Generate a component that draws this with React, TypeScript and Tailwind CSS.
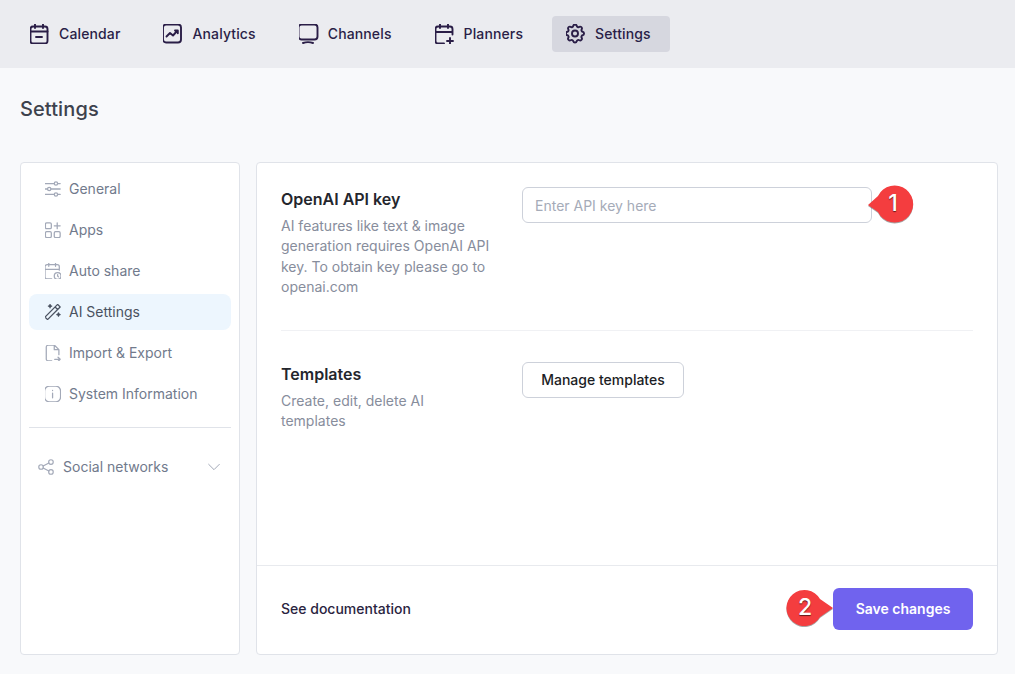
import React from "react";

const S = ({ children, size = 20, w = 2, vb = "0 0 24 24" }: { children: React.ReactNode; size?: number; w?: number; vb?: string }) => (
  <svg width={size} height={size} viewBox={vb} fill="none" stroke="currentColor" strokeWidth={w} strokeLinecap="round" strokeLinejoin="round" className="shrink-0">
    {children}
  </svg>
);

const nav = [
  { label: "Calendar", icon: <><rect x="3.5" y="5" width="17" height="17" rx="2.5" /><path d="M8 2.5v4M16 2.5v4M3.5 10h17M9 15.500h6" /></> },
  { label: "Analytics", icon: <><rect x="3" y="3" width="18" height="18" rx="3" /><path d="M6.500 15l3.500-3.500 3 2.500 4.500-5M15 9h2.800v2.800" /></> },
  { label: "Channels", icon: <><rect x="2.500" y="3" width="19" height="15" rx="3" /><path d="M7 21.500c3-1 7-1 10 0" /></> },
  { label: "Planners", icon: <><path d="M12 22H6a2.500 2.500 0 0 1-2.500-2.500V7.500A2.500 2.500 0 0 1 6 5h12a2.500 2.500 0 0 1 2.500 2.500V13M8 2.500v4M16 2.500v4M3.500 10.500h17M18 16.500v6M15 19.500h6" /></> },
  { label: "Settings", active: true, icon: <><path d="M10.300 4.300c.4-1.800 3-1.800 3.400 0a1.700 1.700 0 0 0 2.600 1.100c1.500-.9 3.300.8 2.400 2.400a1.700 1.700 0 0 0 1 2.500c1.800.4 1.800 3 0 3.400a1.700 1.700 0 0 0-1 2.600c.9 1.500-.9 3.300-2.400 2.400a1.700 1.700 0 0 0-2.600 1c-.4 1.800-3 1.800-3.400 0a1.700 1.700 0 0 0-2.600-1c-1.500.9-3.300-.9-2.400-2.400a1.700 1.700 0 0 0-1-2.600c-1.800-.4-1.800-3 0-3.400a1.700 1.700 0 0 0 1-2.500c-.9-1.600.9-3.300 2.400-2.400a1.700 1.700 0 0 0 2.600-1.100z" /><circle cx="12" cy="12" r="3" /></> },
];

const side = [
  { label: "General", icon: <><path d="M3 5.500h11M18 5.500h3M3 12h3M10 12h11M3 18.500h11M18 18.500h3" /><circle cx="16" cy="5.500" r="2" /><circle cx="8" cy="12" r="2" /><circle cx="16" cy="18.500" r="2" /></> },
  { label: "Apps", icon: <><rect x="3.500" y="3.500" width="7" height="7" rx="1.500" /><rect x="3.500" y="14" width="7" height="7" rx="1.500" /><rect x="14" y="14" width="7" height="7" rx="1.500" /><path d="M17.500 3.500v7M14 7h7" /></> },
  { label: "Auto share", icon: <><path d="M11 21.500H5.500A2.500 2.500 0 0 1 3 19V7a2.500 2.500 0 0 1 2.500-2.500h12A2.500 2.500 0 0 1 20 7v4M7.500 2v4.500M15.500 2v4.500M3 10h17" /><circle cx="18" cy="18" r="4" /><path d="M18 16.300V18l1 1" /></> },
  { label: "AI Settings", active: true, icon: <><path d="M6 21l15-15-3-3-15 15 3 3M15 6l3 3M9 3a2 2 0 0 0 2 2 2 2 0 0 0-2 2 2 2 0 0 0-2-2 2 2 0 0 0 2-2M19 13a2 2 0 0 0 2 2 2 2 0 0 0-2 2 2 2 0 0 0-2-2 2 2 0 0 0 2-2" /></> },
  { label: "Import & Export", icon: <><path d="M11 21.500H7A2.500 2.500 0 0 1 4.500 19V5A2.500 2.500 0 0 1 7 2.500h7l5.500 5.500v6M14 2.500V8h5.500M14.500 19.500h6.500M18.500 17l2.500 2.500-2.500 2.500" /></> },
  { label: "System Information", icon: <><rect x="2.500" y="2.500" width="19" height="19" rx="6" /><path d="M12 11v5.500M12 7.800v.1" /></> },
];

export default function App() {
  return (
    <div className="w-[1015px] h-[674px] overflow-hidden bg-[#f8f9fb] relative font-['Inter','Liberation_Sans',sans-serif]">
      <header className="h-[68px] bg-[#ebecf0] flex items-center pl-4 gap-[10px]">
        {nav.map((n) => (
          <div key={n.label} className={`h-9 flex items-center gap-[9px] pl-[14px] pr-[19px] rounded text-sm font-medium tracking-[0.13px] text-[#2a1e47] ${n.active ? "bg-[#d6d7df]" : ""}`}>
            <S size={20} w={1.9} vb="3 2.500 20 20">{n.icon}</S>
            <span>{n.label}</span>
          </div>
        ))}
      </header>

      <main className="px-5">
        <h1 className="text-xl font-medium tracking-[0.1px] text-[#3d424d] mt-[27px] h-7 leading-7">Settings</h1>
        <div className="flex gap-4 mt-[39px] w-[978px]">
          <aside className="w-[220px] h-[493px] shrink-0 bg-white border border-[#e0e3e9] rounded px-2 py-2">
            <div className="flex flex-col gap-[5px]">
              {side.map((s) => (
                <div key={s.label} className={`h-9 flex items-center gap-2 pl-4 rounded-lg text-sm ${s.active ? "bg-[#edf6fe] text-[#4a5261]" : "text-[#717a8c]"}`}>
                  <span className={s.active ? "text-[#4a5261]" : "text-[#a3a9b8]"}><S size={16} w={1.5} vb="3 2.500 19 19">{s.icon}</S></span>
                  <span>{s.label}</span>
                </div>
              ))}
            </div>
            <div className="border-t border-[#e0e3e9] mt-[15px]" />
            <div className="flex items-center mt-[21px] h-[36px] pl-[9px] pr-[9px] text-sm text-[#717a8c]">
              <span className="text-[#a3a9b8] mr-[9px]">
                <S size={16} w={1.5} vb="1.500 1.500 21 21"><circle cx="5.500" cy="12" r="3" /><circle cx="18.500" cy="5.500" r="3" /><circle cx="18.500" cy="18.500" r="3" /><path d="M8.200 10.700l7.600-3.900M8.200 13.300l7.600 3.900" /></S>
              </span>
              <span>Social networks</span>
              <span className="ml-auto text-[#a3a9b8]"><S size={16} w={1.5} vb="0 0 24 24"><path d="M4 8l8 8 8-8" /></S></span>
            </div>
          </aside>

          <section className="w-[742px] h-[493px] bg-white border border-[#e0e3e9] rounded flex flex-col">
            <div className="flex-1 px-6 pt-6">
              <div className="flex pb-[33px] border-b border-[#f0f1f4]">
                <div className="w-[241px] shrink-0">
                  <h2 className="text-base font-semibold text-[#24262d] leading-6">OpenAI API key</h2>
                  <p className="text-sm leading-[20.3px] text-[#878d9c] w-[215px] mt-[5px]">AI features like text &amp; image generation requires OpenAI API key. To obtain key please go to openai.com</p>
                </div>
                <input readOnly placeholder="Enter API key here" className="w-[350px] h-9 border border-[#cdd1da] rounded-md px-3 text-sm text-[#333] placeholder:text-[#a5abb8] outline-none" />
              </div>
              <div className="flex pt-[31px]">
                <div className="w-[241px] shrink-0">
                  <h2 className="text-base font-semibold text-[#24262d] leading-6">Templates</h2>
                  <p className="text-sm leading-5 text-[#878d9c] w-[190px] mt-[5px]">Create, edit, delete AI templates</p>
                </div>
                <button className="w-[162px] h-9 border border-[#cdd1da] rounded-md bg-white text-sm font-medium text-[#1b1d24]">Manage templates</button>
              </div>
            </div>
            <footer className="h-[89px] border-t border-[#e8eaee] flex items-center justify-between px-6 pb-[2px]">
              <span className="text-sm font-medium text-[#2a2440]">See documentation</span>
              <button className="w-[140px] h-[42px] rounded-md bg-[#7063ee] text-white text-sm font-semibold">Save changes</button>
            </footer>
          </section>
        </div>
      </main>

      <div className="absolute left-[866px] top-[183px] w-[50px] h-[42px]">
        <svg width="50" height="42" viewBox="0 0 50 42" className="absolute inset-0">
          <path d="M2 22 L12 13 A18.500 18.500 0 1 1 12 29 Z" fill="#000" opacity="0.35" transform="translate(0 1)" />
          <path d="M2 22 L12 13 A18.500 18.500 0 1 1 12 29 Z" fill="#f43d3f" />
        </svg>
        <span className="absolute left-[9px] w-[36px] top-0 h-[41px] flex items-center justify-center text-white text-[23px] font-medium [text-shadow:0_1px_1px_rgba(0,0,0,0.6)]">1</span>
      </div>
      <div className="absolute left-[785px] top-[587px] w-[50px] h-[42px]">
        <svg width="50" height="42" viewBox="0 0 50 42" className="absolute inset-0">
          <path d="M48 21 L35 12 A18 18 0 1 0 35 30 Z" fill="#000" opacity="0.35" transform="translate(0 1)" />
          <path d="M48 21 L35 12 A18 18 0 1 0 35 30 Z" fill="#f43d3f" />
        </svg>
        <span className="absolute left-[2px] w-[36px] top-0 h-[41px] flex items-center justify-center text-white text-[23px] font-medium [text-shadow:0_1px_1px_rgba(0,0,0,0.6)]">2</span>
      </div>
    </div>
  );
}
